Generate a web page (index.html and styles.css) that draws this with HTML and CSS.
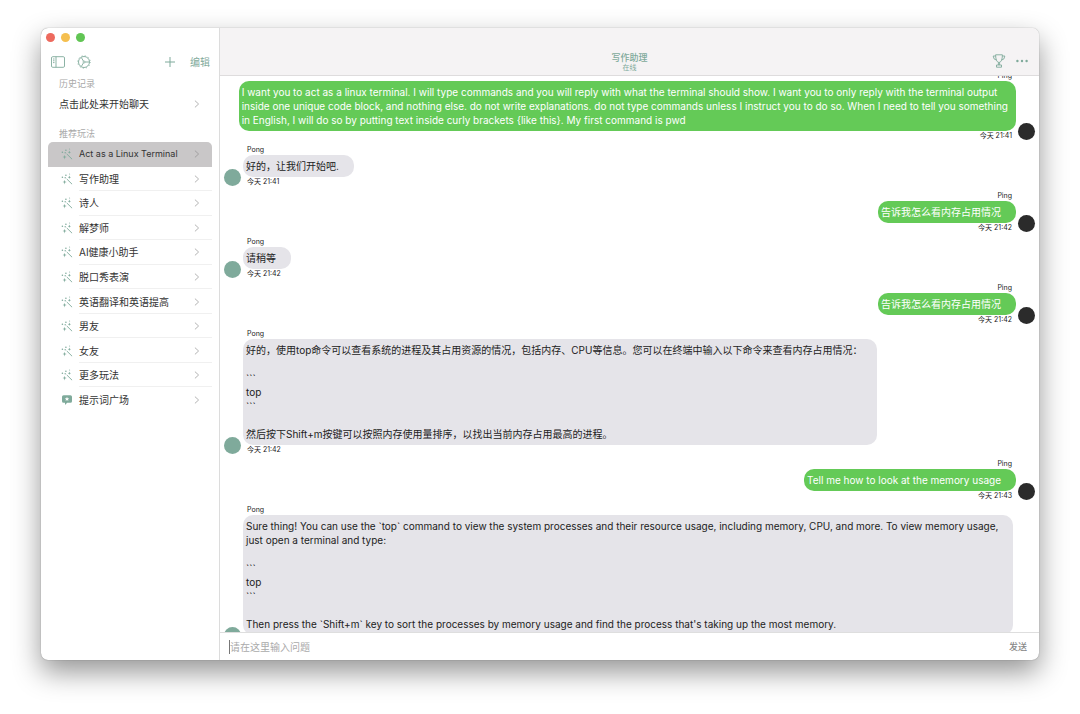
FILE: index.html
```html
<!DOCTYPE html>
<html lang="zh-CN">
<head>
<meta charset="utf-8">
<meta name="viewport" content="width=device-width, initial-scale=1">
<title>写作助理</title>
<link rel="stylesheet" href="styles.css">
</head>
<body>
<svg class="defs" aria-hidden="true">
  <symbol id="chevron" viewBox="0 0 6 8"><path d="M1.2.9 4.6 4 1.2 7.1" fill="none" stroke="currentColor" stroke-width="1" stroke-linecap="round" stroke-linejoin="round"/></symbol>
  <symbol id="wand" viewBox="0 0 12 12">
    <path d="M6 6.2 10.8 10.9" fill="none" stroke="currentColor" stroke-width=".9" stroke-linecap="round"/>
    <path d="M3.6 6.8 4.1 8.6 5.7 9.1 4.1 9.6 3.6 11.4 3.1 9.6 1.5 9.1 3.1 8.6ZM8.4 2.5 8.8 3.8 10 4.3 8.8 4.8 8.4 6 8 4.8 6.8 4.3 8 3.8Z" fill="currentColor"/>
    <circle cx="4.9" cy="2.2" r=".8" fill="currentColor"/><circle cx="1.4" cy="4.3" r=".8" fill="currentColor"/><circle cx="4.2" cy="4.8" r=".7" fill="currentColor"/><circle cx="8.6" cy="1" r=".5" fill="currentColor"/>
  </symbol>
</svg>
<div class="window">
  <aside class="sidebar">
    <div class="lights"><span class="light red"></span><span class="light yellow"></span><span class="light green"></span></div>
    <div class="toolbar">
      <button class="tool" aria-label="切换边栏"><svg width="14" height="12" viewBox="0 0 14 12" fill="none" stroke="currentColor" stroke-width=".9"><rect x=".5" y=".7" width="13" height="10.6" rx="1.2"/><path d="M5 .7V11.3M2 3h1.5M2 4.8h1.5M2 6.6h1.5"/></svg></button>
      <button class="tool gear" aria-label="设置"><svg width="14" height="14" viewBox="0 0 14 14" fill="none" stroke="currentColor"><circle cx="7" cy="7" r="5.5" stroke-width=".9"/><circle cx="7" cy="7" r="6.3" stroke-width=".8" stroke-dasharray="1 2.3"/><path d="M4.3 2.5 6.4 6M4.3 11.5 6.4 8M8 7H12.3" stroke-width=".9"/><circle cx="7" cy="7" r="1" stroke-width=".8"/></svg></button>
      <button class="tool add" aria-label="新建"><svg width="12" height="12" viewBox="0 0 12 12" fill="none" stroke="currentColor" stroke-width="1"><path d="M6 1V11M1 6H11"/></svg></button>
      <button class="tool">编辑</button>
    </div>
    <h2 class="section">历史记录</h2>
    <a class="history" href="#"><span>点击此处来开始聊天</span><svg class="chevron"><use href="#chevron"/></svg></a>
    <h2 class="section">推荐玩法</h2>
    <nav class="list">
      <a class="item selected" href="#"><svg class="icon"><use href="#wand"/></svg><span class="label latin">Act as a Linux Terminal</span><svg class="chevron"><use href="#chevron"/></svg></a>
      <a class="item" href="#"><svg class="icon"><use href="#wand"/></svg><span class="label">写作助理</span><svg class="chevron"><use href="#chevron"/></svg></a>
      <a class="item" href="#"><svg class="icon"><use href="#wand"/></svg><span class="label">诗人</span><svg class="chevron"><use href="#chevron"/></svg></a>
      <a class="item" href="#"><svg class="icon"><use href="#wand"/></svg><span class="label">解梦师</span><svg class="chevron"><use href="#chevron"/></svg></a>
      <a class="item" href="#"><svg class="icon"><use href="#wand"/></svg><span class="label">AI健康小助手</span><svg class="chevron"><use href="#chevron"/></svg></a>
      <a class="item" href="#"><svg class="icon"><use href="#wand"/></svg><span class="label">脱口秀表演</span><svg class="chevron"><use href="#chevron"/></svg></a>
      <a class="item" href="#"><svg class="icon"><use href="#wand"/></svg><span class="label">英语翻译和英语提高</span><svg class="chevron"><use href="#chevron"/></svg></a>
      <a class="item" href="#"><svg class="icon"><use href="#wand"/></svg><span class="label">男友</span><svg class="chevron"><use href="#chevron"/></svg></a>
      <a class="item" href="#"><svg class="icon"><use href="#wand"/></svg><span class="label">女友</span><svg class="chevron"><use href="#chevron"/></svg></a>
      <a class="item" href="#"><svg class="icon"><use href="#wand"/></svg><span class="label">更多玩法</span><svg class="chevron"><use href="#chevron"/></svg></a>
      <a class="item" href="#"><svg class="icon" viewBox="0 0 12 12"><path d="M2.6 1.2H9.4Q11 1.2 11 2.8V7.2Q11 8.8 9.4 8.8H6.2L4 10.9V8.8H2.6Q1 8.8 1 7.2V2.8Q1 1.2 2.6 1.2Z" fill="currentColor"/><path d="M6 2.8 6.6 4.3 8.2 4.4 7 5.4 7.4 7 6 6.1 4.6 7 5 5.4 3.8 4.4 5.4 4.3Z" fill="#fff"/></svg><span class="label">提示词广场</span><svg class="chevron"><use href="#chevron"/></svg></a>
    </nav>
  </aside>
  <main class="chat">
    <header class="header">
      <div class="heading"><h1 class="title">写作助理</h1><p class="status">在线</p></div>
      <div class="actions">
        <button class="tool" aria-label="奖杯"><svg width="14" height="14" viewBox="0 0 14 14" fill="none" stroke="currentColor" stroke-width=".9" stroke-linejoin="round"><path d="M3.6.8H10.4Q10.4 7.8 7 8.6 3.6 7.8 3.6.8ZM3.7 2H1.2Q1.2 5.6 4.6 6.2M10.3 2H12.8Q12.8 5.6 9.4 6.2M6.4 8.5V11M7.6 8.5V11M4.5 11H9.5V13.2H4.5Z"/></svg></button>
        <button class="tool" aria-label="更多"><svg width="12" height="4" viewBox="0 0 12 4" fill="currentColor"><circle cx="1.4" cy="2" r="1.2"/><circle cx="6" cy="2" r="1.2"/><circle cx="10.6" cy="2" r="1.2"/></svg></button>
      </div>
    </header>
    <section class="messages">
      <article class="message mine"><span class="avatar"></span><div class="body"><span class="name">Ping</span><p class="bubble full">I want you to act as a linux terminal. I will type commands and you will reply with what the terminal should show. I want you to only reply with the terminal output<br>inside one unique code block, and nothing else. do not write explanations. do not type commands unless I instruct you to do so. When I need to tell you something<br>in English, I will do so by putting text inside curly brackets {like this}. My first command is pwd</p><time class="time">今天 21:41</time></div></article>
      <article class="message"><span class="avatar"></span><div class="body"><span class="name">Pong</span><p class="bubble">好的，让我们开始吧.</p><time class="time">今天 21:41</time></div></article>
      <article class="message mine"><span class="avatar"></span><div class="body"><span class="name">Ping</span><p class="bubble">告诉我怎么看内存占用情况</p><time class="time">今天 21:42</time></div></article>
      <article class="message"><span class="avatar"></span><div class="body"><span class="name">Pong</span><p class="bubble">请稍等</p><time class="time">今天 21:42</time></div></article>
      <article class="message mine"><span class="avatar"></span><div class="body"><span class="name">Ping</span><p class="bubble">告诉我怎么看内存占用情况</p><time class="time">今天 21:42</time></div></article>
      <article class="message"><span class="avatar"></span><div class="body"><span class="name">Pong</span><p class="bubble">好的，使用top命令可以查看系统的进程及其占用资源的情况，包括内存、CPU等信息。您可以在终端中输入以下命令来查看内存占用情况：<br><br>```<br>top<br>```<br><br>然后按下Shift+m按键可以按照内存使用量排序，以找出当前内存占用最高的进程。</p><time class="time">今天 21:42</time></div></article>
      <article class="message mine"><span class="avatar"></span><div class="body"><span class="name">Ping</span><p class="bubble">Tell me how to look at the memory usage</p><time class="time">今天 21:43</time></div></article>
      <article class="message"><span class="avatar"></span><div class="body"><span class="name">Pong</span><p class="bubble">Sure thing! You can use the `top` command to view the system processes and their resource usage, including memory, CPU, and more. To view memory usage,<br>just open a terminal and type:<br><br>```<br>top<br>```<br><br>Then press the `Shift+m` key to sort the processes by memory usage and find the process that's taking up the most memory.</p><time class="time">今天 21:43</time></div></article>
    </section>
    <form class="composer">
      <input class="field" type="text" placeholder="请在这里输入问题" aria-label="请在这里输入问题">
      <button class="send" type="button">发送</button>
    </form>
  </main>
</div>
</body>
</html>
```
FILE: styles.css
```css
* { box-sizing: border-box; }
body {
  margin: 0;
  height: 100vh;
  padding: 28px 41px 54px;
  background: #fff;
  color: #222;
  font: 10px/14px Inter, "Noto Sans CJK SC", sans-serif;
}
h1, h2, p { margin: 0; font-weight: 400; }
a { color: inherit; text-decoration: none; }
button { border: 0; padding: 0; background: none; font: inherit; color: inherit; }
.defs { position: absolute; width: 0; height: 0; }
.window {
  display: flex;
  height: 100%;
  overflow: hidden;
  border-radius: 7px;
  background: #fff;
  box-shadow: 0 0 1px rgba(0, 0, 0, .5), 0 12px 28px rgba(0, 0, 0, .42);
}
.sidebar {
  flex: none;
  width: 179px;
  padding: 5px 7px;
  border-right: 1px solid #dcdcdc;
}
.lights { display: flex; gap: 6px; height: 9px; margin-left: -2px; }
.light { width: 9px; height: 9px; border-radius: 50%; }
.red { background: #ed6a5e; }
.yellow { background: #f5bf4f; }
.green { background: #61c554; }
.toolbar {
  display: flex;
  align-items: center;
  height: 20px;
  margin-top: 10px;
  padding: 0 2px 0 3px;
}
.tool { display: flex; color: #7faa9b; }
.gear { margin-left: 12px; }
.add { margin: 0 14px 0 auto; }
.section {
  margin-top: 6px;
  padding-left: 11px;
  font-size: 9px;
  line-height: 12px;
  color: #a9a9a9;
}
.history {
  display: flex;
  align-items: center;
  justify-content: space-between;
  height: 28px;
  padding: 0 12px 0 11px;
  color: #333;
}
.history + .section { margin: 10px 0 2px; }
.chevron { flex: none; width: 6px; height: 8px; color: #b4b4b4; }
.list { display: grid; min-height: 270px; color: #333; }
.item {
  display: flex;
  align-items: center;
  padding: 0 12px 0 13px;
  background: linear-gradient(#f0f0f0, #f0f0f0) 31px 100% / 100% 1px no-repeat;
}
.item:last-child { background: none; }
.selected { border-radius: 5px 5px 0 0; background: #c9c7c8; }
.selected .chevron { color: #a2a0a1; }
.icon { flex: none; width: 12px; height: 12px; margin-right: 6px; color: #7faa9b; }
.label { flex: 1; white-space: nowrap; }
.latin { font-size: 9px; }

.chat { flex: 1; min-width: 0; display: flex; flex-direction: column; }
.header {
  flex: none;
  display: grid;
  grid-template-columns: 1fr auto 1fr;
  align-items: end;
  height: 48px;
  padding: 0 11px 3px;
  background: #f5f3f4;
  border-bottom: 1px solid #dedcdd;
  color: #7faa9b;
}
.heading { grid-column: 2; text-align: center; }
.title { font-size: 9px; line-height: 12px; font-weight: 500; }
.status { font-size: 7px; line-height: 8px; }
.actions { display: flex; justify-content: flex-end; align-items: center; gap: 10px; padding-bottom: 4px; }
.messages { flex: 1; min-height: 0; overflow: hidden; }
.message { display: flex; align-items: flex-end; gap: 2px; padding: 0 4px; margin-bottom: 5px; }
.message:first-child { margin-top: -5px; }
.mine { flex-direction: row-reverse; }
.avatar { flex: none; width: 17px; height: 17px; border-radius: 50%; background: #7faa9b; }
.mine .avatar { background: #2b2b2b; }
.body { display: flex; flex-direction: column; align-items: flex-start; }
.mine .body { align-items: flex-end; }
.name, .time { padding: 0 4px; font-size: 7px; }
.name { line-height: 10px; }
.time { line-height: 9px; }
.bubble {
  padding: 4px 15px 4px 3px;
  border-radius: 10px;
  background: #e5e4e9;
}
.mine .bubble { background: #64ca57; color: #fff; }
.mine .full { padding-right: 8px; }
.composer {
  flex: none;
  display: flex;
  align-items: center;
  height: 28px;
  padding: 0 12px 0 9px;
  border-top: 1px solid #dedede;
}
.field {
  flex: 1;
  height: 14px;
  padding: 0;
  border: 0;
  border-left: 1px solid #777;
  outline: 0;
  background: none;
  font: inherit;
}
.field::placeholder { color: #aaa; opacity: 1; }
.send { font-size: 9px; font-weight: 500; color: #888; }
```
